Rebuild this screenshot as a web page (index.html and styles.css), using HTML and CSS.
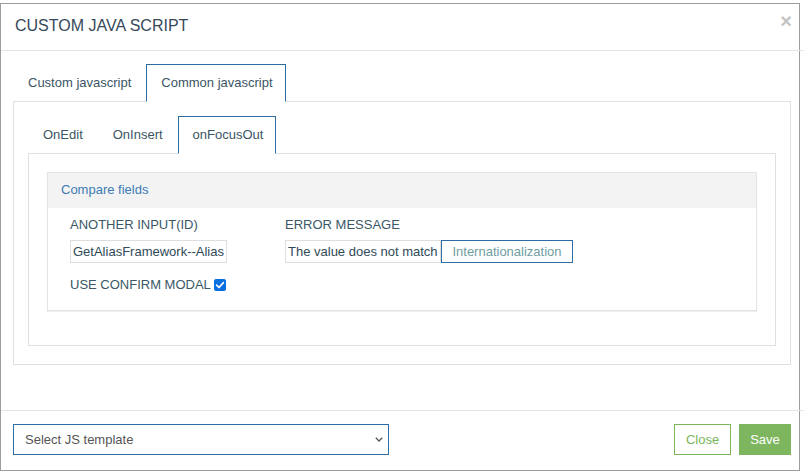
FILE: index.html
```html
<!DOCTYPE html>
<html>
<head>
<meta charset="utf-8">
<link rel="stylesheet" href="styles.css">
</head>
<body>
<div class="modal">
  <div class="modal-header">
    <h4 class="modal-title">CUSTOM JAVA SCRIPT</h4>
    <span class="close">×</span>
  </div>
  <div class="modal-body">
    <ul class="tabs">
      <li class="tab">Custom javascript</li>
      <li class="tab active">Common javascript</li>
    </ul>
    <div class="tab-box outer">
      <ul class="tabs">
        <li class="tab">OnEdit</li>
        <li class="tab">OnInsert</li>
        <li class="tab active">onFocusOut</li>
      </ul>
      <div class="tab-box inner">
        <div class="panel">
          <div class="panel-heading">Compare fields</div>
          <div class="panel-body">
            <div class="fields">
              <div class="field first">
                <label class="lbl">ANOTHER INPUT(ID)</label>
                <div class="input-row">
                  <input class="inp w157" type="text" value="GetAliasFramework--Alias">
                </div>
              </div>
              <div class="field">
                <label class="lbl">ERROR MESSAGE</label>
                <div class="input-row">
                  <input class="inp w156" type="text" value="The value does not match">
                  <span class="btn-i18n">Internationalization</span>
                </div>
              </div>
            </div>
            <div class="confirm">
              <span class="lbl-inline">USE CONFIRM MODAL</span>
              <svg class="cb" width="12" height="12" viewBox="0 0 12 12">
                <rect x="0" y="0" width="12" height="12" rx="2" fill="#0b6ee0"/>
                <path d="M2.6 6.2 L5 8.5 L9.4 3.6" fill="none" stroke="#fff" stroke-width="1.7" stroke-linecap="round" stroke-linejoin="round"/>
              </svg>
            </div>
          </div>
        </div>
      </div>
    </div>
  </div>
  <div class="modal-footer">
    <div class="select">
      <span>Select JS template</span>
      <svg width="8" height="5" viewBox="0 0 8 5"><path d="M0.8 0.8 L4 4 L7.2 0.8" fill="none" stroke="#555" stroke-width="1.3"/></svg>
    </div>
    <div class="actions">
      <span class="btn btn-close">Close</span>
      <span class="btn btn-save">Save</span>
    </div>
  </div>
</div>
</body>
</html>
```
FILE: styles.css
```css
* { box-sizing: border-box; }
html, body { margin: 0; padding: 0; background: #fff; }
body {
  font-family: "Liberation Sans", Arial, sans-serif;
  font-size: 13px;
  color: #333;
}
.modal {
  margin-top: 3px;
  width: 800px;
  border: 1px solid #9d9d9d;
  background: #fff;
}
.modal-header {
  height: 47px;
  margin-right: -6px;
  border-bottom: 1px solid #e5e5e5;
  display: flex;
  justify-content: space-between;
  align-items: center;
  padding: 0 13px 3px 14px;
}
.modal-title {
  margin: 0;
  font-weight: normal;
  font-size: 16px;
  color: #36495a;
}
.close {
  align-self: flex-start;
  margin-top: 7px;
  font-size: 20px;
  line-height: 20px;
  font-weight: bold;
  color: #c4c4c4;
}
.modal-body {
  height: 359px;
  padding: 13px 8px 0 12px;
}
.tabs {
  list-style: none;
  margin: 0;
  padding: 0;
  display: flex;
}
.tab {
  padding: 10px 12px 10px 14px;
  line-height: 16px;
  margin-right: 2px;
  margin-bottom: -1px;
  border: 1px solid transparent;
  color: #3a5565;
  position: relative;
}
.tab.active {
  border-color: #2e6da4;
  border-bottom-color: #fff;
  background: #fff;
  z-index: 1;
}
.tab-box {
  border: 1px solid #e0e0e0;
}
.outer {
  padding: 14px 14px 18px 14px;
}
.inner {
  padding: 18px 18px 34px 18px;
}
.panel {
  border: 1px solid #e3e3e3;
  box-shadow: 0 1px 1px rgba(0,0,0,0.06);
}
.panel-heading {
  height: 35px;
  line-height: 34px;
  padding: 0 13px;
  background: #f3f3f3;
  color: #3d7bb3;
}
.panel-body {
  padding: 9px 18px 18px 22px;
}
.fields {
  display: flex;
}
.field.first {
  width: 215px;
}
.lbl {
  display: block;
  line-height: 15px;
  margin-bottom: 8px;
  color: #3b5866;
}
.input-row {
  display: flex;
}
.inp {
  height: 23px;
  border: 1px solid #dedede;
  padding: 0 2px;
  font-family: "Liberation Sans", Arial, sans-serif;
  font-size: 13px;
  color: #2f4a58;
  background: #fff;
  outline: none;
}
.w157 { width: 157px; }
.w156 { width: 156px; }
.btn-i18n {
  width: 132px;
  height: 23px;
  border: 1px solid #2e6da4;
  color: #6f9ea2;
  display: flex;
  align-items: center;
  justify-content: center;
}
.confirm {
  margin-top: 14px;
  display: flex;
  align-items: center;
  gap: 3px;
  line-height: 15px;
  color: #3b5866;
}
.cb { display: block; margin-top: 1px; }
.modal-footer {
  margin-right: -6px;
  border-top: 1px solid #e5e5e5;
  padding: 13px 14px 15px 12px;
  display: flex;
  justify-content: space-between;
}
.select {
  width: 376px;
  height: 31px;
  border: 1px solid #2e6da4;
  display: flex;
  align-items: center;
  justify-content: space-between;
  padding: 0 5px 0 11px;
  color: #555;
}
.select svg { display: block; }
.actions {
  display: flex;
  gap: 8px;
}
.btn {
  height: 31px;
  display: flex;
  align-items: center;
  justify-content: center;
}
.btn-close {
  width: 57px;
  border: 1px solid #7ab55c;
  color: #7ab55c;
  background: #fff;
}
.btn-save {
  width: 52px;
  background: #7db65e;
  color: #fff;
}
```
